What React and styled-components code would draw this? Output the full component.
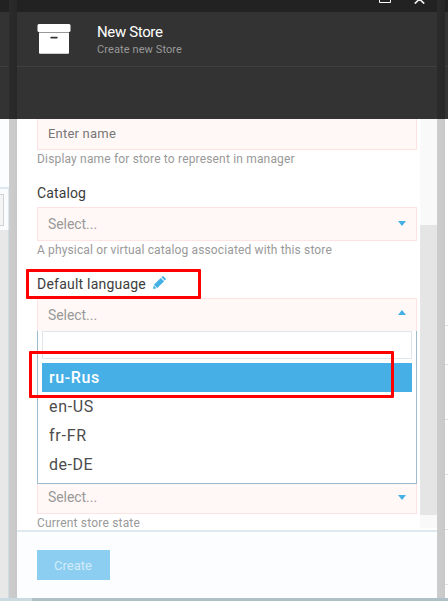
import React from 'react';
import styled, { createGlobalStyle } from 'styled-components';

const Global = createGlobalStyle`
  * { box-sizing: border-box; }
  body { margin: 0; overflow: hidden; font-family: Roboto, "Open Sans", sans-serif; background: #cacaca; }
`;

const Page = styled.div`
  position: relative;
  width: 448px;
  height: 601px;
  display: flex;
  flex-direction: column;
  overflow: hidden;
`;
const Workspace = styled.div`
  height: 598px;
  display: grid;
  grid-template-columns: 9px 8px 420px 8px 3px;
`;
const Track = styled.div`
  display: flex;
  height: 3px;
  background: #b0c0c8;
`;
const Thumb = styled.div`
  width: 32px;
  background: #cbd9e3;
`;

const Column = styled.div`
  display: flex;
  flex-direction: column;
  min-width: 0;
  min-height: 0;
`;
const Gutter = styled(Column)`
  background: linear-gradient(90deg, #cdcdcd, #c8c8c8);
`;
const GutterTop = styled.div`
  height: 119px;
  background: linear-gradient(90deg, #2b2b2b, #272727);
`;
const TitleBar = styled.div`
  height: 12px;
  flex: none;
  background: #222;
  display: flex;
  justify-content: flex-end;
  align-items: flex-start;
  padding-right: 12px;
  gap: 23px;
`;
const Header = styled.div`
  height: 55px;
  flex: none;
  background: #333;
  border-bottom: 1px solid #3f3f3f;
  display: flex;
  padding-left: 20px;
`;
const Toolbar = styled.div`
  height: 52px;
  flex: none;
  background: #333;
`;
const BoxIcon = styled.svg`
  width: 34px;
  height: 31px;
  margin: 12px 26px 0 0;
`;
const HeaderText = styled.div`
  padding-top: 11px;
`;
const Title = styled.div`
  font-size: 15px;
  line-height: 19px;
  letter-spacing: -0.36px;
  color: #fff;
`;
const Subtitle = styled.div`
  font-size: 11px;
  line-height: 15px;
  letter-spacing: 0.1px;
  color: #999;
`;

const LeftPanel = styled.div`
  height: 68px;
  background: #fcfdff;
`;
const LeftSearch = styled.div`
  height: 43px;
  background: #f9fbfd;
  border-top: 2px solid #dee8ef;
  border-right: 1px solid #dee8ef;
  padding: 5px 4px 4px 0;
`;
const LeftField = styled.div`
  height: 32px;
  background: #f4f4f4;
  border: 1px solid #d2d2d2;
  border-left: 0;
`;
const LeftFill = styled.div`
  flex: 1;
  background: #e8e8e8;
  border-right: 1px solid #cfdde5;
`;
const RightList = styled.div`
  display: flex;
  flex-direction: column;
  flex: 1;
  background: #fff;
`;
const RightRow = styled.div`
  flex: none;
  height: ${(p) => p.$h}px;
  border-bottom: 1px solid #dfe4e8;
`;

const Blade = styled(Column)`
  background: #fff;
`;
const Body = styled.div`
  height: 411px;
  flex: none;
  display: flex;
  overflow: hidden;
`;
const Form = styled.div`
  width: 403px;
  padding: 0 3px 0 20px;
`;
const Scrollbar = styled.div`
  width: 17px;
  height: 409px;
  background: #f9f9f9;
  padding-top: 106px;
`;
const ScrollThumb = styled.div`
  height: 290px;
  background: #e5e5e5;
`;
const Field = styled.div`
  display: flex;
  justify-content: space-between;
  align-items: center;
  height: ${(p) => p.$h || 34}px;
  padding: 0 10px ${(p) => p.$lift || 0}px;
  background: #fff8f6;
  border: 1px solid #fde4e3;
  ${(p) => p.$flushTop && 'border-top: 0;'}
  ${(p) => p.$open && 'border-bottom: 0;'}
`;
const Placeholder = styled.span`
  font-size: ${(p) => (p.$input ? 13 : 14)}px;
  letter-spacing: ${(p) => (p.$input ? 0.21 : -0.06)}px;
  line-height: 20px;
  color: ${(p) => (p.$input ? '#777' : '#999')};
`;
const Caret = styled.svg`
  width: 8px;
  height: 5px;
  fill: #43b0e6;
  margin-top: ${(p) => (p.$up ? -5 : p.$low ? 0 : -2)}px;
`;
const Hint = styled.div`
  height: 18px;
  line-height: 18px;
  font-size: 12px;
  letter-spacing: ${(p) => p.$track}px;
  color: #999;
  white-space: nowrap;
`;
const Label = styled.div`
  display: flex;
  align-items: center;
  height: 39px;
  padding-top: 10px;
  font-size: 14px;
  line-height: 20px;
  letter-spacing: ${(p) => p.$track}px;
  color: #3c3c3c;
`;
const Pencil = styled.svg`
  width: 13px;
  height: 13px;
  margin: -3px 0 0 7px;
  fill: #43b0e6;
`;
const Dropdown = styled.div`
  height: 153px;
  border: 1px solid #9dbbcf;
  border-top: 0;
  background: #fff;
  padding: 0 4px;
`;
const Search = styled.div`
  height: 28px;
  border: 1px solid #dee6ec;
  margin-bottom: 4px;
`;
const Option = styled.div`
  height: 29px;
  line-height: 29px;
  padding-left: 7px;
  font-size: 16px;
  letter-spacing: ${(p) => p.$track}px;
  font-weight: ${(p) => (p.$active ? 500 : 400)};
  color: ${(p) => (p.$active ? '#fff' : '#4c4c4c')};
  background: ${(p) => (p.$active ? '#46afe6' : '#fff')};
`;
const Footer = styled.div`
  flex: 1;
  border-top: 2px solid #dee8ef;
  background: #fcfdff;
  padding: 18px 20px;
`;
const Create = styled.button`
  display: block;
  width: 73px;
  height: 30px;
  border: 0;
  padding: 0 1px 0 0;
  background: #8ccef1;
  color: #d3ecfa;
  font: 400 13px Roboto, sans-serif;
`;
const Marker = styled.div`
  position: absolute;
  left: ${(p) => p.$x}px;
  top: ${(p) => p.$y}px;
  width: ${(p) => p.$w}px;
  height: ${(p) => p.$h}px;
  border: 3px solid #fe0000;
  border-radius: 1px;
`;

const Arrow = ({ up, low }) => (
  <Caret $up={up} $low={low} viewBox="0 0 8 5">
    <path d={up ? 'M0 5L4 0L8 5Z' : 'M0 0H8L4 5Z'} />
  </Caret>
);

const options = [
  { name: 'ru-Rus', track: 0.6, active: true },
  { name: 'en-US', track: 0.68 },
  { name: 'fr-FR', track: 0.78 },
  { name: 'de-DE', track: 0.5 },
];

export default function App() {
  return (
    <Page>
      <Global />
      <Workspace>
        <Column>
          <TitleBar />
          <Header />
          <Toolbar />
          <LeftPanel />
          <LeftSearch><LeftField /></LeftSearch>
          <LeftFill />
        </Column>
        <Gutter><GutterTop /></Gutter>
        <Blade>
          <TitleBar>
            <svg width="12" height="3" viewBox="0 0 12 3" fill="none" stroke="#fff">
              <path d="M.5 0V2.5H11.5V0" />
            </svg>
            <svg width="11" height="4" viewBox="0 0 11 4" fill="none" stroke="#eee" strokeWidth="1.7">
              <path d="M.8 3.6L5.5-1L10.2 3.6" />
            </svg>
          </TitleBar>
          <Header>
            <BoxIcon viewBox="0 0 34 31">
              <rect x="0.5" width="33" height="8" rx="1.5" fill="#fff" />
              <path fill="#fff" fillRule="evenodd" d="M2 8.6H32V29Q32 29.8 31 29.8H3Q2 29.8 2 29ZM14.2 12.8Q13.3 12.8 13.3 13.6T14.2 14.5H19.8Q20.7 14.5 20.7 13.6T19.8 12.8Z" />
            </BoxIcon>
            <HeaderText>
              <Title>New Store</Title>
              <Subtitle>Create new Store</Subtitle>
            </HeaderText>
          </Header>
          <Toolbar />
          <Body>
            <Form>
              <Field $h={31} $lift={1} $flushTop><Placeholder $input>Enter name</Placeholder></Field>
              <Hint $track={0.17}>Display name for store to represent in manager</Hint>
              <Label $track={0.12}>Catalog</Label>
              <Field><Placeholder>Select...</Placeholder><Arrow /></Field>
              <Hint $track={0.14}>A physical or virtual catalog associated with this store</Hint>
              <Label $track={0.22}>
                Default language
                <Pencil viewBox="0 0 13 13">
                  <path d="M7.7 1.9L11.1 5.3L4.3 12.1L.9 8.7ZM8.4 1.2L9.3.4Q9.9-.2 10.5.4L12.6 2.5Q13.2 3.1 12.6 3.7L11.8 4.6ZM.7 9.4L3.6 12.3L0 13Z" />
                </Pencil>
              </Label>
              <Field $h={33} $open><Placeholder>Select...</Placeholder><Arrow up /></Field>
              <Dropdown>
                <Search />
                {options.map((o) => (
                  <Option key={o.name} $track={o.track} $active={o.active}>{o.name}</Option>
                ))}
              </Dropdown>
              <Field $h={30} $lift={3} $flushTop><Placeholder>Select...</Placeholder><Arrow low /></Field>
              <Hint $track={0.19}>Current store state</Hint>
            </Form>
            <Scrollbar><ScrollThumb /></Scrollbar>
          </Body>
          <Footer><Create>Create</Create></Footer>
        </Blade>
        <Gutter><GutterTop /></Gutter>
        <Column>
          <TitleBar />
          <Header />
          <Toolbar />
          <RightList>
            <RightRow $h={207} />
            <RightRow $h={39} />
            <RightRow $h={55} />
            <RightRow $h={55} />
            <RightRow $h={55} />
            <RightRow $h={55} />
          </RightList>
        </Column>
      </Workspace>
      <Track><Thumb /></Track>
      <Marker $x={26} $y={269} $w={175} $h={30} />
      <Marker $x={29} $y={351} $w={365} $h={47} />
    </Page>
  );
}
